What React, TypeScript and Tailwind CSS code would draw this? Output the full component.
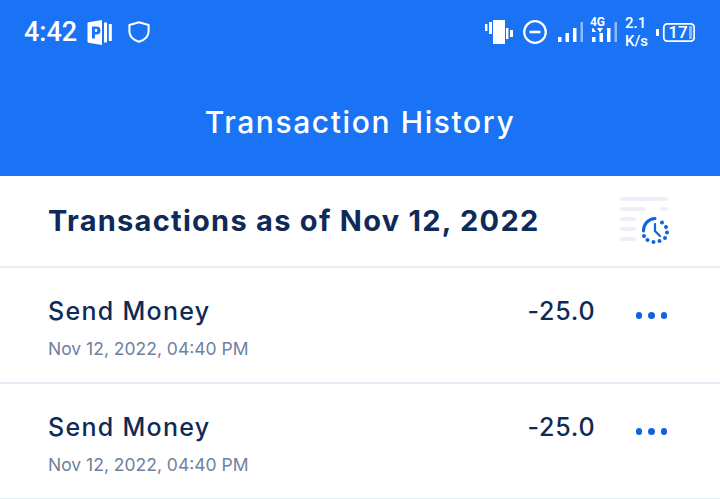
import React from "react";

function PIcon() {
  return (
    <svg width="25" height="25" viewBox="0 0 25 25" fill="none">
      <path d="M0.5 3.5 Q0.5 2.5 1.5 2.3 L15 0 V25 L1.5 22.7 Q0.5 22.5 0.5 21.5 Z" fill="#fff" />
      <path d="M5 18.5 V6.5 H9.5 a3.9 3.9 0 0 1 0 8 H7.9 V18.5 Z" fill="#1a73f5" />
      <rect x="7.9" y="9" width="2.2" height="3" fill="#fff" />
      <rect x="17" y="2.5" width="3" height="20" fill="#fff" />
      <rect x="21.8" y="4" width="3" height="17" fill="#fff" />
    </svg>
  );
}

function Shield() {
  return (
    <svg width="22" height="22" viewBox="0 0 22 22" fill="none" stroke="#fff" strokeWidth="2" strokeLinejoin="round">
      <path d="M11 1.2 L20.6 4 V10.5 C20.6 15.5 16.5 19 11 20.8 C5.5 19 1.4 15.5 1.4 10.5 V4 Z" />
    </svg>
  );
}

function Vibrate() {
  return (
    <svg width="28" height="24" viewBox="0 0 28 24" fill="#fff">
      <rect x="0" y="4" width="2.4" height="7" />
      <rect x="4" y="2" width="3" height="12" />
      <rect x="8" y="0" width="12" height="24" />
      <rect x="21" y="8" width="2.4" height="11" />
      <rect x="25" y="10" width="3" height="7" />
    </svg>
  );
}

function Dnd() {
  return (
    <svg width="24" height="24" viewBox="0 0 24 24" fill="none" stroke="#fff">
      <circle cx="12" cy="12" r="10.8" strokeWidth="2.2" />
      <line x1="6.5" y1="12" x2="17.5" y2="12" strokeWidth="2.6" />
    </svg>
  );
}

function Signal({ arrows }: { arrows?: boolean }) {
  return (
    <svg width="25" height="20" viewBox="0 0 25 20" fill="#fff">
      <rect x="0" y="15" width="3.5" height="5" />
      <rect x="7.5" y="11" width="3.5" height="9" />
      <rect x="15" y="6" width="3.5" height="14" />
      <rect x="22.5" y="0" width="2.5" height="20" fill="#8fbafa" />
      {arrows ? <path d="M-2 10 L1 5.5 L4 10 Z M5 6 L11 6 L8 10.5 Z" /> : null}
    </svg>
  );
}

function Battery() {
  return (
    <svg width="39" height="19" viewBox="0 0 39 19" fill="none">
      <rect x="0" y="6" width="3" height="7" rx="0.5" fill="#fff" />
      <rect x="7.8" y="0.9" width="30.4" height="17.2" rx="3.5" stroke="#fff" strokeWidth="1.8" />
      <rect x="33" y="3" width="3.2" height="13" fill="#8fbafa" />
    </svg>
  );
}

function HistoryIcon() {
  const dots: [number, number][] = [
    [662, 224.5], [666, 229], [667, 234.5], [665, 240], [659.5, 243], [653.5, 244], [647.5, 242], [644, 238],
  ];
  return (
    <svg width="52" height="60" viewBox="618 192 52 60" fill="none">
      <g fill="#eef0f8">
        <rect x="620" y="198" width="48" height="4" rx="2" />
        <rect x="620" y="208" width="26" height="4" rx="2" />
        <rect x="660" y="208" width="8" height="4" rx="2" />
        <rect x="620" y="218" width="16" height="4" rx="2" />
        <rect x="620" y="228" width="16" height="4" rx="2" />
        <rect x="620" y="238" width="16" height="4" rx="2" />
      </g>
      <path d="M643.5 232 A12 12 0 0 1 655 219.5" stroke="#0f62e0" strokeWidth="3" strokeLinecap="round" />
      <path d="M655 225 L655 232 L660 237" stroke="#0f62e0" strokeWidth="2.2" strokeLinecap="round" strokeLinejoin="round" />
      {dots.map(([x, y]) => (
        <circle key={x + "-" + y} cx={x} cy={y - 1} r="2" fill="#0f62e0" />
      ))}
    </svg>
  );
}

function Row() {
  return (
    <div className="flex h-[116px] items-start justify-between border-b-2 border-[#e6ecf6] pl-12 pr-[53px]">
      <div className="pt-7">
        <div className="text-[25px] leading-[30px] font-medium tracking-[1.3px] text-[#0f2a56]">Send Money</div>
        <div className="mt-[11px] text-[17.5px] leading-[24px] text-[#6f80a0]">Nov 12, 2022, 04:40 PM</div>
      </div>
      <div className="flex items-start gap-[40px] pt-7">
        <div className="text-[25px] leading-[30px] font-medium tracking-[0.8px] text-[#0f2a56]">-25.0</div>
        <div className="flex gap-[6px] pt-[16px]">
          <span className="size-[6.5px] rounded-full bg-[#0f62e0]" />
          <span className="size-[6.5px] rounded-full bg-[#0f62e0]" />
          <span className="size-[6.5px] rounded-full bg-[#0f62e0]" />
        </div>
      </div>
    </div>
  );
}

export default function App() {
  return (
    <div className="h-[499px] w-[720px] overflow-hidden bg-white font-['Inter',sans-serif]">
      <div className="flex h-[176px] flex-col bg-[#1a73f5] text-white">
        <div className="flex h-[42px] items-center justify-between pt-[22px] pl-6 pr-[25px]">
          <div className="flex items-center">
            <span className="font-['Roboto',sans-serif] text-[27px] leading-[38px] font-medium">4:42</span>
            <span className="ml-[10px]"><PIcon /></span>
            <span className="ml-[16px]"><Shield /></span>
          </div>
          <div className="flex items-center">
            <Vibrate />
            <span className="ml-[10px]"><Dnd /></span>
            <span className="ml-[11px]"><Signal /></span>
            <span className="relative ml-[9px]">
              <Signal arrows />
              <span className="absolute -top-[5px] -left-[2px] font-['Roboto',sans-serif] text-[12px] leading-[10px] font-bold">4G</span>
            </span>
            <div className="ml-[8px] font-['Roboto',sans-serif] text-[15px] leading-[18px] font-medium">
              <div>2.1</div>
              <div>K/s</div>
            </div>
            <div className="relative ml-[8px]">
              <Battery />
              <span className="absolute top-0 left-[9px] w-[26px] text-center font-['Roboto',sans-serif] text-[17px] leading-[19px] font-medium">17</span>
            </div>
          </div>
        </div>
        <div className="pt-[60px] text-center text-[30px] leading-[40px] font-medium tracking-[1.6px]">Transaction History</div>
      </div>
      <div className="flex h-[92px] items-center justify-between border-b-2 border-[#eceef2] pl-12 pr-[50px]">
        <div className="text-[29px] font-bold tracking-[1.27px] text-[#0f2a56]">Transactions as of Nov 12, 2022</div>
        <HistoryIcon />
      </div>
      <Row />
      <Row />
    </div>
  );
}
